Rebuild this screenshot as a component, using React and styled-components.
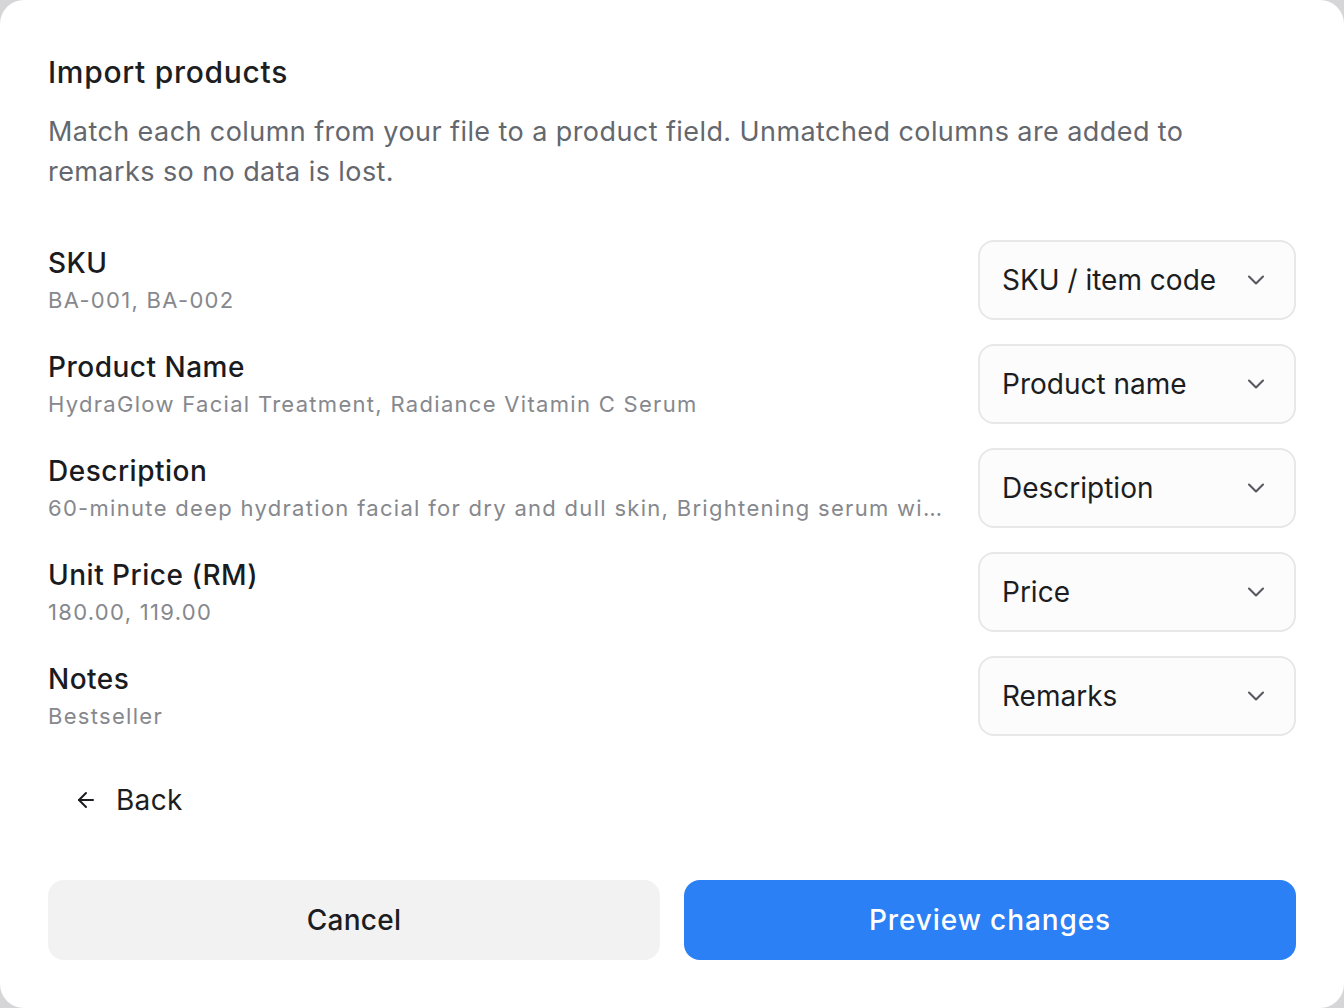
import React from "react";
import styled, { createGlobalStyle } from "styled-components";
import { ChevronDown, ArrowLeft } from "lucide-react";

const GlobalStyle = createGlobalStyle`
  html, body {
    margin: 0;
    padding: 0;
    background: #d6d6d8;
    font-family: "Inter", "Liberation Sans", sans-serif;
  }
  * {
    box-sizing: border-box;
  }
`;

const Modal = styled.div`
  width: 1344px;
  height: 1008px;
  background: #ffffff;
  border-radius: 24px;
  padding: 48px;
  display: flex;
  flex-direction: column;
`;

const Title = styled.h2`
  margin: 0;
  font-size: 30px;
  line-height: 48px;
  font-weight: 500;
  letter-spacing: 0.7px;
  color: #1d1e22;
`;

const Subtitle = styled.p`
  margin: 16px 0 0;
  font-size: 27px;
  line-height: 40px;
  letter-spacing: 0.42px;
  color: #64676d;
  max-width: 1180px;
`;

const Rows = styled.div`
  margin-top: 48px;
  display: flex;
  flex-direction: column;
  gap: 24px;
`;

const Row = styled.div`
  display: grid;
  grid-template-columns: 1fr 318px;
  column-gap: 32px;
  align-items: center;
`;

const Info = styled.div`
  min-width: 0;
  display: flex;
  flex-direction: column;
  gap: 4px;
`;

const Label = styled.div`
  font-size: 28px;
  line-height: 36px;
  font-weight: 500;
  letter-spacing: 0.5px;
  color: #1a1b1f;
`;

const Sample = styled.div`
  font-size: 22px;
  line-height: 30px;
  color: #86888d;
  letter-spacing: 1.3px;
  white-space: nowrap;
  overflow: hidden;
  text-overflow: ellipsis;
`;

const Select = styled.button`
  height: 80px;
  border: 2px solid #e8e8e9;
  border-radius: 16px;
  background: #fcfcfc;
  padding: 0 24px 0 22px;
  display: flex;
  align-items: center;
  justify-content: space-between;
  font-family: inherit;
  font-size: 28px;
  color: #1c1d21;
  cursor: pointer;
  svg {
    color: #55575c;
    flex-shrink: 0;
  }
`;

const BackButton = styled.button`
  align-self: flex-start;
  margin-top: 36px;
  height: 56px;
  padding: 0 0 0 26px;
  border: none;
  background: transparent;
  display: flex;
  align-items: center;
  gap: 18px;
  font-family: inherit;
  font-size: 28px;
  letter-spacing: 0.3px;
  color: #1c1d21;
  cursor: pointer;
`;

const Footer = styled.div`
  margin-top: auto;
  display: grid;
  grid-template-columns: 1fr 1fr;
  gap: 24px;
`;

const ActionButton = styled.button`
  height: 80px;
  border: none;
  border-radius: 16px;
  font-family: inherit;
  font-size: 28px;
  font-weight: 500;
  letter-spacing: ${(p) => (p.$primary ? "0.9px" : "0.3px")};
  cursor: pointer;
  background: ${(p) => (p.$primary ? "#2a80f4" : "#f2f2f2")};
  color: ${(p) => (p.$primary ? "#ffffff" : "#1c1d21")};
`;

const mappings = [
  { label: "SKU", sample: "BA-001, BA-002", field: "SKU / item code" },
  {
    label: "Product Name",
    sample: "HydraGlow Facial Treatment, Radiance Vitamin C Serum",
    field: "Product name",
  },
  {
    label: "Description",
    sample:
      "60-minute deep hydration facial for dry and dull skin, Brightening serum with 15% vitamin C",
    field: "Description",
  },
  { label: "Unit Price (RM)", sample: "180.00, 119.00", field: "Price" },
  { label: "Notes", sample: "Bestseller", field: "Remarks" },
];

export default function App() {
  return (
    <>
      <GlobalStyle />
      <Modal>
        <Title>Import products</Title>
        <Subtitle>
          Match each column from your file to a product field. Unmatched
          columns are added to remarks so no data is lost.
        </Subtitle>
        <Rows>
          {mappings.map((m) => (
            <Row key={m.label}>
              <Info>
                <Label>{m.label}</Label>
                <Sample>{m.sample}</Sample>
              </Info>
              <Select>
                {m.field}
                <ChevronDown size={28} strokeWidth={1.8} />
              </Select>
            </Row>
          ))}
        </Rows>
        <BackButton>
          <ArrowLeft size={24} strokeWidth={2} />
          Back
        </BackButton>
        <Footer>
          <ActionButton>Cancel</ActionButton>
          <ActionButton $primary>Preview changes</ActionButton>
        </Footer>
      </Modal>
    </>
  );
}
